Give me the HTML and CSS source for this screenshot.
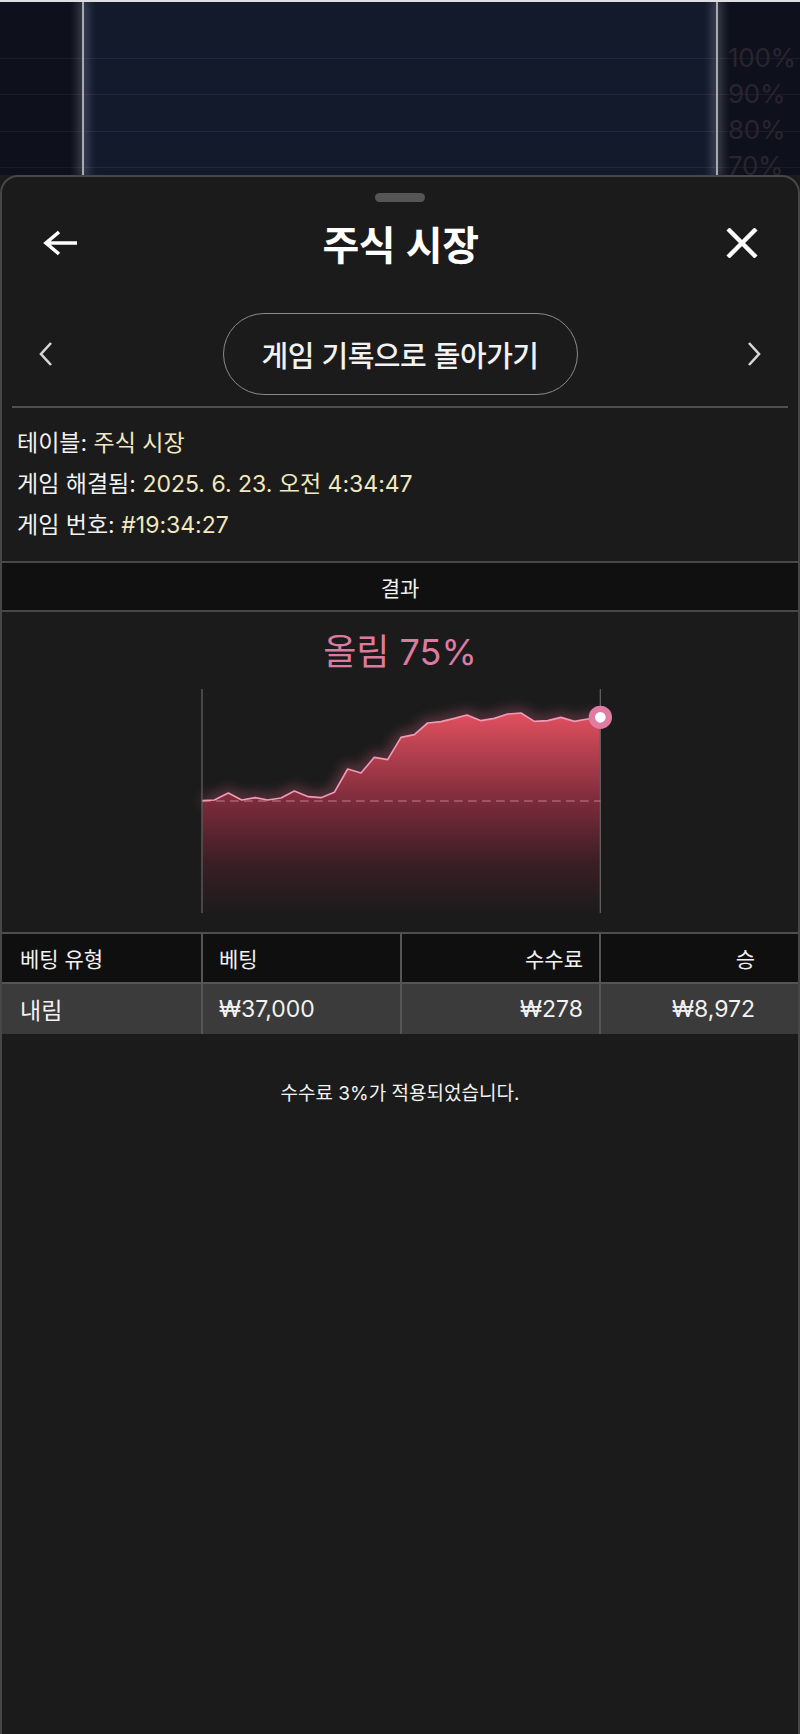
FILE: index.html
```html
<!DOCTYPE html>
<html lang="ko">
<head>
<meta charset="utf-8">
<title>주식 시장</title>
<link rel="stylesheet" href="styles.css">
</head>
<body>
<div class="backdrop">
  <div class="bd-side"></div>
  <div class="bd-line"></div>
  <div class="bd-main"></div>
  <div class="bd-line"></div>
  <div class="bd-labels">
    <span>100%</span><span>90%</span><span>80%</span><span>70%</span>
  </div>
</div>
<div class="sheet">
  <div class="handle"></div>
  <div class="header">
    <button class="icon-btn back" aria-label="뒤로">
      <svg width="34" height="26" viewBox="0 0 34 26"><path d="M16 2 L3 13 L16 24 M3 13 H34" fill="none" stroke="#fff" stroke-width="3.6" stroke-linecap="butt" stroke-linejoin="miter"/></svg>
    </button>
    <h1 class="title">주식 시장</h1>
    <button class="icon-btn close" aria-label="닫기">
      <svg width="32" height="30" viewBox="0 0 32 30"><path d="M2 1 L30 29 M30 1 L2 29" fill="none" stroke="#fff" stroke-width="4.4"/></svg>
    </button>
  </div>
  <div class="nav">
    <span class="chev left"><svg width="14" height="24" viewBox="0 0 14 24"><path d="M12 1 L2 12 L12 23" fill="none" stroke="#d6d6d6" stroke-width="2.6"/></svg></span>
    <button class="pill">게임 기록으로 돌아가기</button>
    <span class="chev right"><svg width="14" height="24" viewBox="0 0 14 24"><path d="M2 1 L12 12 L2 23" fill="none" stroke="#d6d6d6" stroke-width="2.6"/></svg></span>
  </div>
  <div class="divider"></div>
  <div class="info">
    <p>테이블: <span class="val">주식 시장</span></p>
    <p>게임 해결됨: <span class="val">2025. 6. 23. 오전 4:34:47</span></p>
    <p>게임 번호: <span class="val">#19:34:27</span></p>
  </div>
  <div class="section-head">결과</div>
  <div class="result">
    <div class="result-title">올림 75%</div>
    <svg class="chart" width="400" height="225" viewBox="0 0 1200 675">
      <defs>
        <linearGradient id="fillg" x1="0" y1="70" x2="0" y2="675" gradientUnits="userSpaceOnUse">
          <stop offset="0" stop-color="#e2505f"/>
          <stop offset="0.45" stop-color="#7a2a3a"/>
          <stop offset="0.75" stop-color="#3a1e25"/>
          <stop offset="1" stop-color="#1b1b1b"/>
        </linearGradient>
        <filter id="glow" x="-20%" y="-50%" width="140%" height="200%">
          <feGaussianBlur stdDeviation="18"/>
        </filter>
      </defs>
      <polyline points="5,335 40,333 82,312 122,333 163,326 200,333 240,327 280,306 322,323 360,326 400,310 440,240 480,252 520,205 560,212 600,145 640,137 680,102 720,98 760,88 798,78 840,95 880,88 920,75 960,72 1000,97 1040,95 1080,85 1120,97 1160,90 1198,85" fill="none" stroke="#e06a8c" stroke-width="30" opacity="0.35" filter="url(#glow)"/>
      <polygon points="3,335 40,333 82,312 122,333 163,326 200,333 240,327 280,306 322,323 360,326 400,310 440,240 480,252 520,205 560,212 600,145 640,137 680,102 720,98 760,88 798,78 840,95 880,88 920,75 960,72 1000,97 1040,95 1080,85 1120,97 1160,90 1198,85 1198,675 3,675" fill="url(#fillg)"/>
      <line x1="3" y1="0" x2="3" y2="672" stroke="#5e5e5e" stroke-width="4"/>
      <line x1="1198" y1="0" x2="1198" y2="672" stroke="#5e5e5e" stroke-width="4"/>
      <line x1="3" y1="336" x2="1198" y2="336" stroke="#c8909f" stroke-width="3.5" stroke-dasharray="26 16" opacity="0.85"/>
      <polyline points="5,335 40,333 82,312 122,333 163,326 200,333 240,327 280,306 322,323 360,326 400,310 440,240 480,252 520,205 560,212 600,145 640,137 680,102 720,98 760,88 798,78 840,95 880,88 920,75 960,72 1000,97 1040,95 1080,85 1120,97 1160,90 1198,85" fill="none" stroke="#f09ab4" stroke-width="5" stroke-linejoin="round"/>
      <circle cx="1198" cy="85" r="35" fill="#e07ca2"/>
      <circle cx="1198" cy="85" r="16" fill="#ffffff"/>
    </svg>
  </div>
  <div class="bets">
    <div class="cell th first">베팅 유형</div>
    <div class="cell th">베팅</div>
    <div class="cell th num">수수료</div>
    <div class="cell th num last">승</div>
    <div class="cell td first">내림</div>
    <div class="cell td">₩37,000</div>
    <div class="cell td num">₩278</div>
    <div class="cell td num last">₩8,972</div>
  </div>
  <p class="note">수수료 3%가 적용되었습니다.</p>
</div>
</body>
</html>
```

FILE: styles.css
```css
* { box-sizing: border-box; }
html, body { margin: 0; padding: 0; }
body {
  background: #1b1b1b;
  font-family: "Inter", "Noto Sans CJK KR", "Noto Sans", sans-serif;
  color: #f2f2f2;
  width: 800px;
  min-height: 1734px;
  overflow: hidden;
}

/* backdrop behind the sheet */
.backdrop {
  height: 175px;
  display: flex;
  overflow: hidden;
  border-top: 2px solid #dedee3;
  background-color: #0e111b;
  background-image: repeating-linear-gradient(to bottom, transparent 0, transparent 16px, rgba(60, 50, 80, 0.3) 16px, rgba(60, 50, 80, 0.3) 17px, transparent 17px, transparent 36.3px);
  background-size: 100% 140px;
  background-position: 0 40px;
  background-repeat: no-repeat;
}
.bd-side { width: 82px; }
.bd-line {
  width: 2px;
  background: #a9a9b2;
  box-shadow: 0 0 10px 4px rgba(190, 195, 215, 0.28);
  position: relative;
  z-index: 1;
}
.bd-main {
  flex: 1;
  background-color: #131a2c;
  background-image: repeating-linear-gradient(to bottom, transparent 0, transparent 16px, rgba(70, 50, 80, 0.45) 16px, rgba(70, 50, 80, 0.45) 17px, transparent 17px, transparent 36.3px);
  background-size: 100% 140px;
  background-position: 0 40px;
  background-repeat: no-repeat;
}
.bd-labels {
  width: 82px;
  display: flex;
  flex-direction: column;
  padding: 38px 0 0 10px;
  font-size: 26px;
  line-height: 36px;
  letter-spacing: -0.3px;
  color: #2a2430;
}

/* sheet */
.sheet {
  min-height: 1559px;
  background: #1b1b1b;
  border: 2px solid #474747;
  border-bottom: none;
  border-radius: 18px 18px 0 0;
  position: relative;
  z-index: 2;
}
.handle {
  width: 50px;
  height: 9px;
  border-radius: 5px;
  background: #555555;
  margin: 16px auto 0;
}
.header {
  display: grid;
  grid-template-columns: 1fr auto 1fr;
  align-items: center;
  height: 70px;
  margin-top: 6px;
  padding: 0 40px 0 41px;
}
.icon-btn {
  background: none;
  border: none;
  padding: 0;
  display: flex;
  cursor: pointer;
}
.close { justify-self: end; }
.title {
  margin: 0;
  font-family: "Noto Sans CJK KR", sans-serif;
  font-size: 40px;
  font-weight: 700;
  letter-spacing: -0.5px;
  color: #ffffff;
}
.nav {
  display: grid;
  grid-template-columns: 1fr auto 1fr;
  align-items: center;
  margin-top: 35px;
  padding: 0 37px;
}
.chev { display: flex; }
.chev.right { justify-self: end; }
.pill {
  width: 355px;
  height: 82px;
  border: 1.5px solid #8a8a8a;
  border-radius: 41px;
  background: transparent;
  color: #f2f2f2;
  font-family: "Noto Sans CJK KR", sans-serif;
  font-size: 29px;
  font-weight: 500;
  letter-spacing: -0.5px;
}
.divider {
  height: 2px;
  background: #4e4e4e;
  margin: 11px 10px 0;
}
.info {
  padding: 15px 15px 15px;
}
.info p {
  margin: 0;
  font-size: 23px;
  line-height: 41px;
}
.val { color: #f1e8bf; }

.section-head {
  height: 51px;
  border-top: 2px solid #474747;
  border-bottom: 2px solid #474747;
  background: #101010;
  display: flex;
  align-items: center;
  justify-content: center;
  font-size: 21px;
}
.result {
  display: flex;
  flex-direction: column;
  align-items: center;
}
.result-title {
  margin-top: 20px;
  font-size: 36px;
  line-height: 40px;
  color: #dc7aa0;
}
.chart {
  display: block;
  margin-top: 17px;
  overflow: visible;
  margin-right: -2px;
}

.bets {
  margin-top: 18px;
  display: grid;
  grid-template-columns: repeat(4, 1fr);
  border-top: 2px solid #4e4e4e;
}
.cell {
  height: 50px;
  display: flex;
  align-items: center;
  padding: 0 16px;
  font-size: 21px;
  border-left: 2px solid #555555;
}
.cell.first { border-left: none; padding-left: 18px; }
.cell.last { padding-right: 43px; }
.cell.num { justify-content: flex-end; }
.th {
  background: #0f0f0f;
  border-bottom: 2px solid #555555;
}
.td {
  background: #3b3b3b;
  font-size: 23px;
}
.note {
  margin: 44px 0 0;
  text-align: center;
  font-size: 19px;
  color: #f2f2f2;
}
```
